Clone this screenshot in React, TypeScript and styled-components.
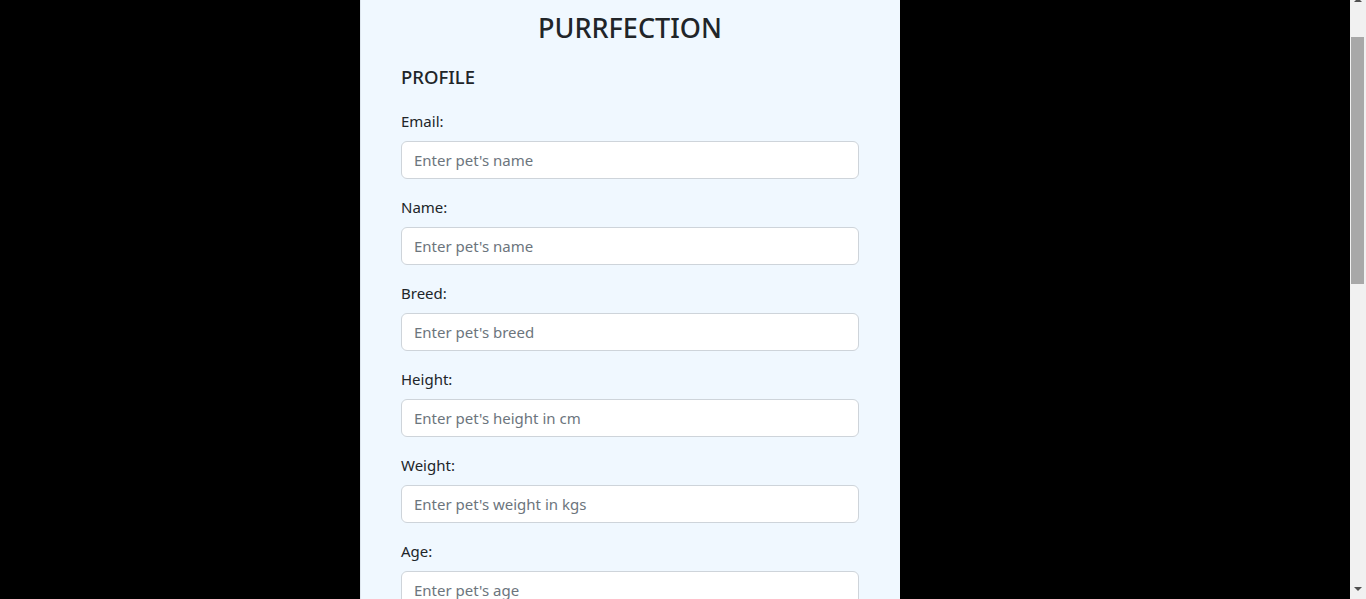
import React from "react";
import styled, { createGlobalStyle } from "styled-components";

const GlobalStyle = createGlobalStyle`
  html, body {
    margin: 0;
    padding: 0;
    background: #000000;
  }
  body {
    font-family: "Noto Sans", "Open Sans", sans-serif;
    color: #212529;
    padding-right: 16px;
  }
  * {
    box-sizing: border-box;
  }
`;

const Panel = styled.main`
  width: 540px;
  margin-left: 360px;
  min-height: 100vh;
  padding: 10px 41px 40px 40px;
  background: #f0f8ff;
  border-left: 1px solid #dfe7ef;
`;

const Title = styled.h1`
  margin: 0 0 19px;
  font-size: 27px;
  font-weight: 500;
  line-height: 36px;
  text-align: center;
  color: #212529;
`;

const Section = styled.h2`
  margin: 0 0 20px;
  font-size: 18.5px;
  font-weight: 500;
  line-height: 24px;
`;

const Form = styled.form`
  display: flex;
  flex-direction: column;
`;

const Field = styled.div`
  display: flex;
  flex-direction: column;
  margin-bottom: 16px;
`;

const Label = styled.label`
  font-size: 15px;
  line-height: 24px;
  margin-bottom: 8px;
`;

const Input = styled.input`
  width: 100%;
  height: 38px;
  padding: 6px 12px;
  font-family: inherit;
  font-size: 15px;
  line-height: 24px;
  color: #212529;
  background: #ffffff;
  border: 1px solid #ced4da;
  border-radius: 6px;
  outline: none;
  &::placeholder {
    color: #6c757d;
  }
`;

const TextArea = styled.textarea`
  width: 100%;
  height: 120px;
  padding: 6px 12px;
  font-family: inherit;
  font-size: 15px;
  line-height: 24px;
  background: #ffffff;
  border: 1px solid #ced4da;
  border-radius: 6px;
  resize: none;
  &::placeholder {
    color: #6c757d;
  }
`;

const Button = styled.button`
  align-self: flex-start;
  height: 38px;
  padding: 6px 12px;
  font-family: inherit;
  font-size: 15px;
  color: #ffffff;
  background: #0d6efd;
  border: 1px solid #0d6efd;
  border-radius: 6px;
`;

/* stand-in for the browser's vertical scrollbar seen in the screenshot */
const ScrollTrack = styled.div`
  position: fixed;
  top: 0;
  right: 0;
  width: 16px;
  height: 100vh;
  background: #f1f1f1;
  display: flex;
  flex-direction: column;
  justify-content: space-between;
  align-items: center;
`;

const Arrow = styled.div<{ $up?: boolean }>`
  width: 0;
  height: 0;
  border-left: 4px solid transparent;
  border-right: 4px solid transparent;
  ${(p) =>
    p.$up
      ? "border-bottom: 4px solid #505050; margin-top: -2px;"
      : "border-top: 4px solid #505050; margin-bottom: 8px;"}
`;

const Thumb = styled.div`
  position: absolute;
  top: 37px;
  left: 1px;
  width: 13px;
  height: 247px;
  background: #a8a8a8;
`;

const fields = [
  { id: "email", label: "Email:", placeholder: "Enter pet's name" },
  { id: "name", label: "Name:", placeholder: "Enter pet's name" },
  { id: "breed", label: "Breed:", placeholder: "Enter pet's breed" },
  { id: "height", label: "Height:", placeholder: "Enter pet's height in cm" },
  { id: "weight", label: "Weight:", placeholder: "Enter pet's weight in kgs" },
  { id: "age", label: "Age:", placeholder: "Enter pet's age" },
  { id: "gender", label: "Gender:", placeholder: "Enter pet's gender" },
  { id: "color", label: "Color:", placeholder: "Enter pet's color" },
  { id: "vet", label: "Vet:", placeholder: "Enter pet's vet" },
  { id: "food", label: "Food:", placeholder: "Enter pet's favourite food" },
  { id: "toy", label: "Toy:", placeholder: "Enter pet's favourite toy" },
];

export default function App() {
  return (
    <>
      <GlobalStyle />
      <Panel>
        <Title>PURRFECTION</Title>
        <Section>PROFILE</Section>
        <Form onSubmit={(e) => e.preventDefault()}>
          {fields.map((f) => (
            <Field key={f.id}>
              <Label htmlFor={f.id}>{f.label}</Label>
              <Input id={f.id} type="text" placeholder={f.placeholder} />
            </Field>
          ))}
          <Field>
            <Label htmlFor="about">About:</Label>
            <TextArea id="about" placeholder="Tell us about your pet" />
          </Field>
          <Button type="submit">Save</Button>
        </Form>
      </Panel>
      <ScrollTrack>
        <Arrow $up />
        <Thumb />
        <Arrow />
      </ScrollTrack>
    </>
  );
}
